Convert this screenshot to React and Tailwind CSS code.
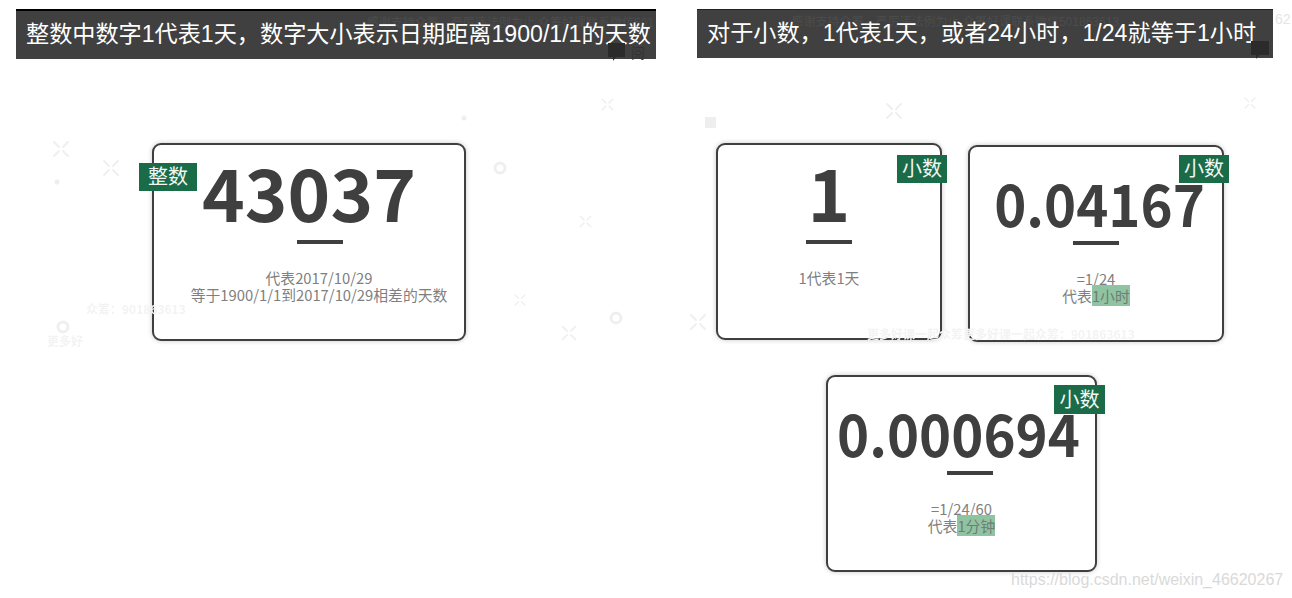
import React from 'react';

const CJK = { fontFamily: '"Noto Sans CJK SC", sans-serif' };
const HEAD = { fontFamily: '"Liberation Sans", "Noto Sans CJK SC", sans-serif' };

/* ── small pieces ── */
const Badge = ({ label, className }) => (
  <span className={`absolute flex items-center justify-center bg-[#1a6b47] text-[#f2f7f4] text-[20px] leading-none pb-[2px] ${className}`}>
    {label}
  </span>
);

const Hl = ({ children }) => <span className="bg-[#90c3a2] text-[#6f7d74]">{children}</span>;

const Note = ({ children, className }) => (
  <div className={`mt-[25px] text-[14.8px] leading-[17.5px] text-[#7f7f7f] text-center whitespace-nowrap ${className}`}>{children}</div>
);

const Card = ({ className, num, numClass, barClass, badge, children }) => (
  <div className={`relative flex flex-col items-center bg-white border-2 border-[#3f3f3f] rounded-[9px] shadow-[0_0_5px_rgba(0,0,0,0.22)] ${className}`}>
    {badge}
    <div className={`font-bold text-[#3f3f3f] leading-none whitespace-nowrap ${numClass}`}>{num}</div>
    <div className={`w-[46px] h-[4px] bg-[#3f3f3f] shrink-0 ${barClass}`} />
    {children}
  </div>
);

/* faint sparkles and rings that sit behind the slides */
const Spark = ({ x, y, s = 1 }) => (
  <path transform={`translate(${x} ${y}) scale(${s})`} d="M3 3l5 5M17 3l-5 5M3 17l5-5M17 17l-5-5" />
);

const Decor = () => (
  <svg className="absolute inset-0 blur-[0.6px]" width="1292" height="598" viewBox="0 0 1292 598" fill="none" stroke="#efefef" strokeWidth="2" strokeLinecap="round">
    <Spark x={51} y={139} />
    <Spark x={101} y={158} />
    <Spark x={578} y={214} s={0.75} />
    <Spark x={600} y={97} s={0.75} />
    <Spark x={884} y={101} />
    <Spark x={1243} y={96} s={0.7} />
    <Spark x={688} y={312} />
    <Spark x={560} y={324} s={0.9} />
    <Spark x={513} y={293} s={0.7} />
    <circle cx="500" cy="168" r="5" strokeWidth="3" />
    <circle cx="63" cy="327" r="5" strokeWidth="3" />
    <circle cx="616" cy="318" r="5" strokeWidth="3" />
    <rect x="705" y="117" width="11" height="11" fill="#eeeeee" stroke="none" />
    <circle cx="57" cy="182" r="2.5" fill="#eeeeee" stroke="none" />
    <circle cx="464" cy="118" r="2.5" fill="#eeeeee" stroke="none" />
  </svg>
);

/* comment bubbles that hang off the video frames */
const Bubbles = () => (
  <svg className="absolute inset-0" width="1292" height="598" viewBox="0 0 1292 598" fill="#2b2b2b">
    <path d="M608 43h17v14h-9l-3 4v-4h-5z" />
    <path d="M1251 41h18v14h-10l-3 4v-4h-5z" />
  </svg>
);

const Header = ({ text, mark, markClass, className }) => (
  <div className={`relative flex items-center bg-[#404040] text-white text-[23.15px] leading-none whitespace-nowrap ${className}`} style={HEAD}>
    <span className={`absolute top-[5px] text-[12px] leading-[14px] text-[#4c4c4c] ${markClass}`}>{mark}</span>
    <span className="relative">{text}</span>
  </div>
);

export default function App() {
  return (
    <div className="relative w-[1292px] h-[598px] overflow-hidden bg-white flex items-start" style={CJK}>
      <Decor />

      {/* left slide */}
      <section className="relative ml-[16px] w-[640px] pt-[9px] shrink-0">
        <Header
          text="整数中数字1代表1天，数字大小表示日期距离1900/1/1的天数"
          mark="感谢支持众筹，严厉违法例为止 众筹好课联系微信501"
          markClass="right-[2px]"
          className="h-[50px] pl-[10px] border-t-2 border-black"
        />
        <Card
          className="w-[314px] h-[198px] ml-[136px] mt-[84px] pt-[10px]"
          numClass="text-[72.5px]"
          barClass="mt-[12px] ml-[22px]"
          num="43037"
          badge={<Badge label="整数" className="left-[-15px] top-[18px] w-[58px] h-[28px]" />}
        >
          <Note className="ml-[20px]">
            代表2017/10/29<br />等于1900/1/1到2017/10/29相差的天数
          </Note>
        </Card>
      </section>

      {/* right slide */}
      <section className="relative ml-[41px] w-[576px] pt-[9px] shrink-0">
        <Header
          text="对于小数，1代表1天，或者24小时，1/24就等于1小时"
          mark="感谢支持众筹，严厉违法例为止 众筹好课联系微信501863613"
          markClass="right-[154px]"
          className="h-[49px] pl-[10px] border-t border-[#222222]"
        />
        <div className="flex items-start mt-[85px] ml-[19px] gap-[26px]">
          <Card
            className="w-[226px] h-[197px] pt-[10px]"
            numClass="text-[72.5px]"
            barClass="mt-[12px]"
            num="1"
            badge={<Badge label="小数" className="right-[-7px] top-[10px] w-[50px] h-[28px]" />}
          >
            <Note>1代表1天</Note>
          </Card>
          <Card
            className="w-[256px] h-[197px] mt-[2px] pt-[29px]"
            numClass="text-[54.5px] scale-y-[1.06] ml-[7px]"
            barClass="mt-[10px]"
            num="0.04167"
            badge={<Badge label="小数" className="right-[-7px] top-[8px] w-[50px] h-[28px]" />}
          >
            <Note>
              =1/24<br />代表<Hl>1小时</Hl>
            </Note>
          </Card>
        </div>
        <Card
          className="w-[271px] h-[197px] ml-[129px] mt-[33px] pt-[29px]"
          numClass="text-[54.5px] scale-y-[1.06] mr-[6px]"
          barClass="mt-[10px] ml-[17px]"
          num="0.000694"
          badge={<Badge label="小数" className="right-[-10px] top-[8px] w-[51px] h-[29px]" />}
        >
          <Note>
            =1/24/60<br />代表<Hl>1分钟</Hl>
          </Note>
        </Card>
      </section>

      {/* overlays: watermarks and comment icons */}
      <Bubbles />
      <span className="absolute left-[631px] top-[44px] text-[14px] leading-4 text-[#333333]">阅</span>
      <span className="absolute left-[86px] top-[301px] text-[12px] leading-4 font-bold text-[#f3f3f3] blur-[0.5px]">众筹：901863613</span>
      <span className="absolute left-[47px] top-[333px] text-[12px] leading-4 font-bold text-[#f3f3f3] blur-[0.5px]">更多好</span>
      <span className="absolute left-[867px] top-[326px] text-[12px] leading-4 font-bold text-[#f3f3f3] blur-[0.5px]">更多好课一起众筹更多好课一起众筹：901863613</span>
      <span className="absolute left-[1275px] top-[11px] text-[14px] leading-4 text-[#e5e5e5]" style={HEAD}>62</span>
      <span className="absolute left-[1011px] top-[571px] text-[16px] leading-[18px] text-[#d9d9d9] whitespace-nowrap" style={HEAD}>
        https://blog.csdn.net/weixin_46620267
      </span>
    </div>
  );
}
